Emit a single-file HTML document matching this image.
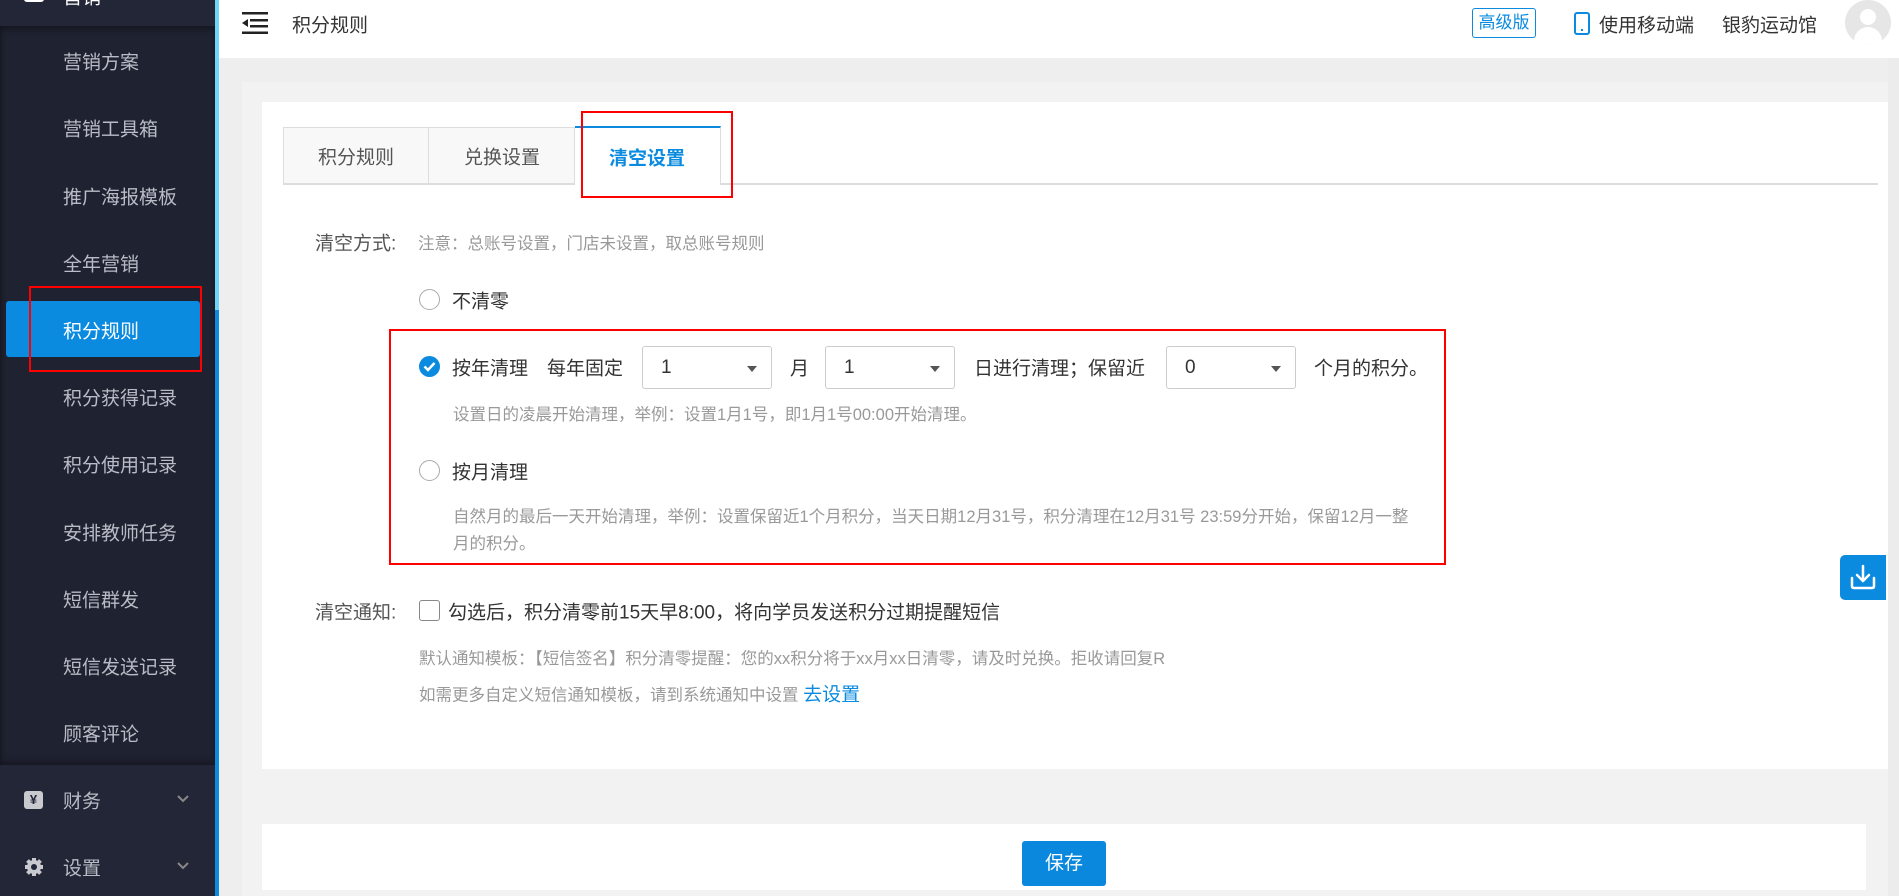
<!DOCTYPE html>
<html><head><meta charset="utf-8"><style>
*{margin:0;padding:0;box-sizing:border-box}
body{width:1899px;height:896px;overflow:hidden;background:#eeeeee;font-family:"Liberation Sans","Noto Sans CJK SC",sans-serif;position:relative;color:#333}
.a{position:absolute;white-space:nowrap}
.side{position:absolute;left:0;top:0;width:216px;height:896px;background:#222636}
.sub{position:absolute;left:0;top:26px;width:216px;height:739px;background:#1f2230;box-shadow:inset 0 4px 6px rgba(0,0,0,.3),inset 0 -4px 6px rgba(0,0,0,.25)}
.mi{position:absolute;left:63px;font-size:19px;color:#b9bcc6;transform:translateY(-50%)}
.t{transform:translateY(-50%)}
.f{font-size:19px;color:#333}
.g{font-size:16.5px;color:#999}
.radio{position:absolute;width:21px;height:21px;border:1.5px solid #aaa;border-radius:50%;background:#fff}
.sel{position:absolute;height:43px;border:1px solid #ccc;border-radius:3px;background:#fff;width:130px}
.sel span{position:absolute;left:18px;top:50%;transform:translateY(-50%);font-size:19px;color:#333}
.sel i{position:absolute;right:14px;top:19px;border-left:5px solid transparent;border-right:5px solid transparent;border-top:6px solid #555}
.red{position:absolute;border:2.5px solid #f00}
</style></head><body>
<div class="side"></div>
<div class="sub"></div>
<div class="a" style="left:215px;top:0;width:4px;height:310px;background:#6dd5fa"></div>
<div class="a" style="left:215px;top:310px;width:4px;height:586px;background:#0a8be0"></div>
<div class="a" style="left:24px;top:-6px;width:20px;height:8px;background:#fff;border-radius:3px"></div>
<div class="mi" style="top:-4px;color:#fff">营销</div>
<div class="mi" style="top:61px">营销方案</div>
<div class="mi" style="top:128px">营销工具箱</div>
<div class="mi" style="top:196px">推广海报模板</div>
<div class="mi" style="top:263px">全年营销</div>
<div class="a" style="left:6px;top:301px;width:194px;height:56px;background:#0a8be0;border-radius:3px"></div>
<div class="mi" style="top:330px;color:#fff">积分规则</div>
<div class="mi" style="top:397px">积分获得记录</div>
<div class="mi" style="top:464px">积分使用记录</div>
<div class="mi" style="top:532px">安排教师任务</div>
<div class="mi" style="top:599px">短信群发</div>
<div class="mi" style="top:666px">短信发送记录</div>
<div class="mi" style="top:733px">顾客评论</div>
<div class="a" style="left:24px;top:791px;width:19px;height:18px;background:#c8cad0;border-radius:3px;color:#222636;font-size:13px;font-weight:bold;text-align:center;line-height:18px">¥</div>
<div class="mi" style="top:800px">财务</div>
<svg class="a" style="left:177px;top:795px" width="12" height="8" viewBox="0 0 12 8"><polyline points="1,1 6,6 11,1" fill="none" stroke="#888" stroke-width="2"/></svg>
<svg class="a" style="left:24px;top:857px" width="20" height="20" viewBox="0 0 20 20"><circle cx="10" cy="10" r="7" fill="#c8cad0"/><g stroke="#c8cad0" stroke-width="4"><line x1="10" y1="1" x2="10" y2="19"/><line x1="1" y1="10" x2="19" y2="10"/><line x1="3.5" y1="3.5" x2="16.5" y2="16.5"/><line x1="16.5" y1="3.5" x2="3.5" y2="16.5"/></g><circle cx="10" cy="10" r="3" fill="#222636"/></svg>
<div class="mi" style="top:867px">设置</div>
<svg class="a" style="left:177px;top:862px" width="12" height="8" viewBox="0 0 12 8"><polyline points="1,1 6,6 11,1" fill="none" stroke="#888" stroke-width="2"/></svg>
<div class="red" style="left:29px;top:286px;width:173px;height:86px"></div>

<div class="a" style="left:219px;top:0;width:1680px;height:58px;background:#fff"></div>
<svg class="a" style="left:242px;top:12px" width="27" height="22" viewBox="0 0 27 22"><g fill="#222"><rect x="0" y="0" width="26" height="2.5"/><rect x="8" y="7" width="18" height="2.5"/><rect x="8" y="13" width="18" height="2.5"/><rect x="0" y="19.5" width="26" height="2.5"/><polygon points="0,11 6,7 6,15"/></g></svg>
<div class="a t f" style="left:292px;top:24px">积分规则</div>
<div class="a" style="left:1472px;top:8px;width:64px;height:30px;border:1.5px solid #0a8be0;border-radius:3px;color:#0a8be0;font-size:17px;text-align:center;line-height:27px">高级版</div>
<div class="a" style="left:1574px;top:12px;width:16px;height:23px;border:2.5px solid #0a8be0;border-radius:3px"></div>
<div class="a" style="left:1581px;top:29px;width:2px;height:2px;background:#0a8be0"></div>
<div class="a t f" style="left:1599px;top:24px">使用移动端</div>
<div class="a t f" style="left:1722px;top:24px">银豹运动馆</div>
<div class="a" style="left:1845px;top:0;width:46px;height:45px;border-radius:50%;background:#e6e6e6;overflow:hidden"><div class="a" style="left:15px;top:9px;width:16px;height:16px;border-radius:50%;background:#fff"></div><div class="a" style="left:9px;top:27px;width:28px;height:20px;border-radius:14px 14px 0 0;background:#fff"></div></div>

<div class="a" style="left:242px;top:82px;width:1646px;height:814px;background:#f2f2f2"></div>
<div class="a" style="left:1888px;top:58px;width:11px;height:838px;background:#ececec"></div>
<div class="a" style="left:262px;top:102px;width:1626px;height:667px;background:#fff"></div>
<div class="a" style="left:262px;top:824px;width:1604px;height:66px;background:#fff"></div>

<div class="a" style="left:283px;top:127px;width:146px;height:57px;background:#f8f8f8;border:1px solid #ddd;border-bottom:none"></div>
<div class="a" style="left:429px;top:127px;width:146px;height:57px;background:#f8f8f8;border:1px solid #ddd;border-left:none;border-bottom:none"></div>
<div class="a" style="left:283px;top:183px;width:1595px;height:1.5px;background:#ddd"></div>
<div class="a" style="left:575px;top:126px;width:146px;height:59px;background:#fff;border-top:2.5px solid #0a8be0;border-right:1px solid #ddd"></div>
<div class="a t f" style="left:318px;top:156px;color:#555">积分规则</div>
<div class="a t f" style="left:464px;top:156px;color:#555">兑换设置</div>
<div class="a t f" style="left:609px;top:157px;color:#0a8be0;font-weight:bold">清空设置</div>
<div class="red" style="left:581px;top:111px;width:152px;height:87px"></div>

<div class="a t f" style="left:315px;top:242px;color:#555">清空方式:</div>
<div class="a t g" style="left:418px;top:242px">注意：总账号设置，门店未设置，取总账号规则</div>
<div class="radio" style="left:419px;top:289px"></div>
<div class="a t f" style="left:452px;top:300px">不清零</div>

<div class="a" style="left:419px;top:356px;width:21px;height:21px;border-radius:50%;background:#0a8be0"><svg width="21" height="21"><polyline points="5.5,10.5 9,14 15.5,7" fill="none" stroke="#fff" stroke-width="2.5"/></svg></div>
<div class="a t f" style="left:452px;top:367px">按年清理</div>
<div class="a t f" style="left:547px;top:367px">每年固定</div>
<div class="sel" style="left:642px;top:346px"><span>1</span><i></i></div>
<div class="a t f" style="left:790px;top:367px">月</div>
<div class="sel" style="left:825px;top:346px"><span>1</span><i></i></div>
<div class="a t f" style="left:974px;top:367px">日进行清理；保留近</div>
<div class="sel" style="left:1166px;top:346px"><span>0</span><i></i></div>
<div class="a t f" style="left:1314px;top:367px">个月的积分。</div>
<div class="a t g" style="left:453px;top:413px">设置日的凌晨开始清理，举例：设置1月1号，即1月1号00:00开始清理。</div>
<div class="radio" style="left:419px;top:460px"></div>
<div class="a t f" style="left:452px;top:471px">按月清理</div>
<div class="a t g" style="left:453px;top:515px">自然月的最后一天开始清理，举例：设置保留近1个月积分，当天日期12月31号，积分清理在12月31号 23:59分开始，保留12月一整</div>
<div class="a t g" style="left:453px;top:542px">月的积分。</div>
<div class="red" style="left:389px;top:329px;width:1057px;height:236px"></div>

<div class="a t f" style="left:315px;top:611px;color:#555">清空通知:</div>
<div class="a" style="left:419px;top:600px;width:21px;height:21px;border:1.5px solid #888;border-radius:3px;background:#fff"></div>
<div class="a t f" style="left:448px;top:611px">勾选后，积分清零前15天早8:00，将向学员发送积分过期提醒短信</div>
<div class="a t g" style="left:419px;top:657px">默认通知模板：【短信签名】积分清零提醒：您的xx积分将于xx月xx日清零，请及时兑换。拒收请回复R</div>
<div class="a t g" style="left:419px;top:693px">如需更多自定义短信通知模板，请到系统通知中设置 <span style="color:#0a8be0;font-size:19px">去设置</span></div>

<div class="a" style="left:1840px;top:555px;width:46px;height:45px;background:#0a8be0;border-radius:5px 0 0 5px"><svg width="46" height="45" viewBox="0 0 46 45"><g fill="none" stroke="#fff" stroke-width="2.5" stroke-linecap="round" stroke-linejoin="round"><line x1="23" y1="11" x2="23" y2="25"/><polyline points="17,20 23,26 29,20"/><path d="M12,23 V31 Q12,33 14,33 H32 Q34,33 34,31 V23"/></g></svg></div>

<div class="a" style="left:1022px;top:841px;width:84px;height:45px;background:#0a88dd;border-radius:3px;color:#fff;font-size:19px;text-align:center;line-height:45px">保存</div>
</body></html>
